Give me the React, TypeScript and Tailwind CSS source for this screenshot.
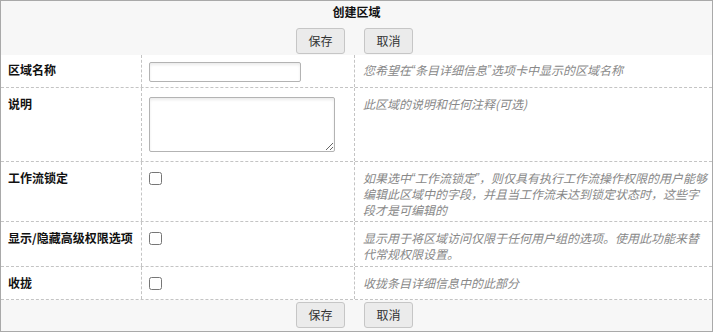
import React from 'react'

type Row = {
  label: string
  field: 'text' | 'textarea' | 'checkbox'
  hint: React.ReactNode
  pad: string
}

// quotes set in a Latin face so they stay narrow like the original
const Q = ({ c }: { c: string }) => (
  <span className="align-top leading-4" style={{ fontFamily: '"Liberation Sans", sans-serif' }}>
    {c}
  </span>
)

const rows: Row[] = [
  {
    label: '区域名称',
    field: 'text',
    hint: (
      <>
        您希望在<Q c="“" />条目详细信息<Q c="”" />选项卡中显示的区域名称
      </>
    ),
    pad: 'pt-[7px] pb-[5px]',
  },
  { label: '说明', field: 'textarea', hint: '此区域的说明和任何注释(可选)', pad: 'pt-2 pb-1' },
  {
    label: '工作流锁定',
    field: 'checkbox',
    hint: (
      <>
        如果选中<Q c="“" />工作流锁定<Q c="”" />，则仅具有执行工作流操作权限的用户能够编辑此区域中的字段，并且当工作流未达到锁定状态时，这些字段才是可编辑的
      </>
    ),
    pad: 'pt-2 pb-[3px]',
  },
  {
    label: '显示/隐藏高级权限选项',
    field: 'checkbox',
    hint: '显示用于将区域访问仅限于任何用户组的选项。使用此功能来替代常规权限设置。',
    pad: 'pt-2 pb-1',
  },
  { label: '收拢', field: 'checkbox', hint: '收拢条目详细信息中的此部分', pad: 'pt-2 pb-[7px]' },
]

function Buttons() {
  return (
    <div className="flex justify-center gap-[19px] pr-[4px]">
      <button className="h-[26px] w-[49px] rounded-[3px] border border-[#c6c6c6] bg-[#ebebeb] text-[12px] text-[#333]">
        保存
      </button>
      <button className="h-[26px] w-[49px] rounded-[3px] border border-[#c6c6c6] bg-[#ebebeb] text-[12px] text-[#333]">
        取消
      </button>
    </div>
  )
}

export default function App() {
  return (
    <div
      className="w-[713px] h-[332px] overflow-hidden border border-[#a9a9a9] bg-[#f7f7f7] text-[12px] leading-4"
      style={{ fontFamily: '"Noto Sans CJK SC", "Liberation Sans", sans-serif' }}
    >
      <div className="pt-[3px] pb-[1px]">
        <div className="text-center font-bold text-[#111] mb-2">创建区域</div>
        <Buttons />
      </div>

      <div className="bg-white border-b border-dashed border-[#c4c4c4]">
        {rows.map((r, i) => (
          <div
            key={r.label}
            className={
              'grid grid-cols-[141px_213px_1fr] ' +
              (i < rows.length - 1 ? 'border-b border-dashed border-[#c4c4c4]' : '')
            }
          >
            <div className={'border-r border-dashed border-[#c4c4c4] pl-[7px] font-bold text-[#111] ' + r.pad}>
              {r.label}
            </div>
            <div className={'border-r border-dashed border-[#c4c4c4] pl-[7px] ' + r.pad}>
              {r.field === 'text' && (
                <input
                  type="text"
                  className="block h-[20px] w-[152px] rounded-[2px] border border-[#b3b3b3] bg-white shadow-[inset_0_2px_3px_rgba(0,0,0,0.08)] outline-none"
                />
              )}
              {r.field === 'textarea' && (
                <textarea className="block mt-[1px] mb-[5px] h-[55px] w-[186px] rounded-[2px] border border-[#b3b3b3] bg-white shadow-[inset_0_2px_3px_rgba(0,0,0,0.08)] outline-none" />
              )}
              {r.field === 'checkbox' && (
                <input type="checkbox" className="block my-[2px] h-[13px] w-[13px]" />
              )}
            </div>
            <div className={'pl-[8px] pr-[4px] italic text-[#888] ' + r.pad}>{r.hint}</div>
          </div>
        ))}
      </div>

      <div className="pt-[2px]">
        <Buttons />
      </div>
    </div>
  )
}
